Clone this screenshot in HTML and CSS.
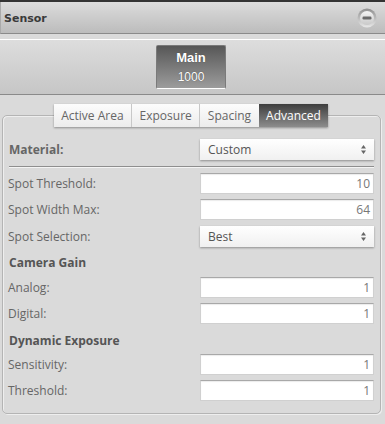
FILE: index.html
```html
<!DOCTYPE html>
<html lang="en">

<head>
    <meta charset="UTF-8">
    <title>Sensor</title>
    <link rel="stylesheet" href="styles.css">
</head>

<body>
    <div class="panel">
        <!-- Panel header -->
        <div class="panel-head">
            <span class="title">Sensor</span>
            <span class="collapse">
                <svg width="20" height="20" viewBox="0 0 20 20">
                    <defs>
                        <linearGradient id="ring" x1="0" y1="0" x2="0" y2="1">
                            <stop offset="0" stop-color="#8f8f8f"/>
                            <stop offset="1" stop-color="#e8e8e8"/>
                        </linearGradient>
                        <linearGradient id="face" x1="0" y1="0" x2="0" y2="1">
                            <stop offset="0" stop-color="#f4f4f4"/>
                            <stop offset="1" stop-color="#c8c8c8"/>
                        </linearGradient>
                    </defs>
                    <circle cx="10" cy="10" r="9.5" fill="url(#ring)"/>
                    <circle cx="10" cy="10" r="7" fill="url(#face)"/>
                    <rect x="5.5" y="8.5" width="9" height="3" rx="1.2" fill="#6a6a6a"/>
                </svg>
            </span>
        </div>

        <!-- Sensor selector -->
        <div class="sensor-bar">
            <div class="sensor-btn">
                <b>Main</b>
                <span>1000</span>
            </div>
        </div>

        <fieldset class="settings">
            <legend class="tabs">
                <span class="tab">Active Area</span>
                <span class="tab">Exposure</span>
                <span class="tab">Spacing</span>
                <span class="tab active">Advanced</span>
            </legend>

            <div class="row">
                <label class="strong">Material:</label>
                <div class="select">Custom
                    <svg class="arrows" width="5" height="9" viewBox="0 0 5 9"><path d="M2.5 0L5 3.5H0zM2.5 9L0 5.5H5z" fill="#666"/></svg>
                </div>
            </div>
            <hr class="sep">

            <div class="row">
                <label>Spot Threshold:</label>
                <div class="field">10</div>
            </div>
            <div class="row">
                <label>Spot Width Max:</label>
                <div class="field">64</div>
            </div>
            <div class="row tall">
                <label>Spot Selection:</label>
                <div class="select">Best
                    <svg class="arrows" width="5" height="9" viewBox="0 0 5 9"><path d="M2.5 0L5 3.5H0zM2.5 9L0 5.5H5z" fill="#666"/></svg>
                </div>
            </div>

            <h4>Camera Gain</h4>
            <div class="row">
                <label>Analog:</label>
                <div class="field">1</div>
            </div>
            <div class="row">
                <label>Digital:</label>
                <div class="field">1</div>
            </div>

            <h4 class="gap">Dynamic Exposure</h4>
            <div class="row">
                <label>Sensitivity:</label>
                <div class="field">1</div>
            </div>
            <div class="row">
                <label>Threshold:</label>
                <div class="field">1</div>
            </div>
        </fieldset>
    </div>
</body>

</html>
```

FILE: styles.css
```css
/* Basic reset */

* {
    margin: 0;
    padding: 0;
    box-sizing: border-box;
}

body {
    font-family: "Open Sans", sans-serif;
    font-size: 12px;
    background-color: #dadada;
    color: #666;
    width: 385px;
    height: 424px;
    overflow: hidden;
}

.panel {
    border-top: 2px solid #333;
}

/* Header bar */

.panel-head {
    height: 32px;
    display: flex;
    align-items: center;
    justify-content: space-between;
    padding: 0 8px 0 3px;
    background: linear-gradient(#dcdcdc, #bcbcbc);
    border-bottom: 1px solid #8a8a8a;
    border-left: 1px solid #aaa;
}

.title {
    font-family: "DejaVu Sans", sans-serif;
    font-weight: bold;
    font-size: 11px;
    color: #3a3a3a;
    padding-top: 1px;
}

.collapse svg {
    display: block;
}

/* Sensor selector */

.sensor-bar {
    margin-top: 5px;
    border-top: 1px solid #fff;
    height: 56px;
    background: linear-gradient(#dddddd, #c6c6c6);
    border-bottom: 1px solid #8a8a8a;
    display: flex;
    justify-content: center;
    padding-top: 5px;
}

.sensor-btn {
    width: 70px;
    height: 44px;
    margin-right: 3px;
    background: linear-gradient(#575757, #9c9c9c);
    border: 1px solid #7a7a7a;
    border-bottom: 1px solid #fff;
    border-radius: 2px;
    color: #fff;
    display: flex;
    flex-direction: column;
    align-items: center;
    font-family: "Liberation Sans", Arial, sans-serif;
    text-shadow: 0 0 1px #444;
}

.sensor-btn b {
    font-size: 13px;
    margin-top: 4px;
}

.sensor-btn span {
    font-size: 12px;
    margin-top: 5px;
}

/* Tabbed settings box */

.settings {
    margin: 9px 4px 0 2px;
    border: 1px solid #b4b4b4;
    border-radius: 5px;
    box-shadow: inset 1px 1px 0 #eee, 1px 1px 0 #eee;
    padding: 9px 6px 10px 5px;
}

.tabs {
    margin: 0 auto;
    display: flex;
    box-shadow: 0 1px 2px rgba(0, 0, 0, 0.35);
}

.tab {
    display: block;
    height: 23px;
    line-height: 23px;
    padding: 0 7.5px;
    background: linear-gradient(#fcfcfc, #ececec);
    color: #666;
    border-left: 1px solid #c8c8c8;
}

.tab:first-child {
    border-left: none;
}

.tab.active {
    background: linear-gradient(#3e3e3e, #8c8c8c);
    color: #fff;
    border-left: none;
}

.row {
    display: flex;
    align-items: center;
    justify-content: space-between;
    height: 26px;
}

.row.tall {
    height: 28px;
}

label {
    color: #666;
}

label.strong {
    font-weight: bold;
    font-size: 12px;
    color: #666;
    padding-left: 1px;
}

.field {
    width: 174px;
    height: 21px;
    background: #fff;
    border: 1px solid #d0d0d0;
    border-top-color: #a8a8a8;
    box-shadow: inset 0 1px 1px rgba(0, 0, 0, 0.08);
    text-align: right;
    padding-right: 3px;
    line-height: 19px;
    color: #777;
}

.select {
    width: 174px;
    height: 21px;
    background: linear-gradient(#ffffff, #f0f0f0);
    box-shadow: 0 1px 2px rgba(0, 0, 0, 0.35);
    padding: 0 8px;
    line-height: 21px;
    color: #555;
    display: flex;
    align-items: center;
    justify-content: space-between;
}

.arrows {
    display: block;
}

.sep {
    border: none;
    border-top: 1px solid #8e8e8e;
    border-bottom: 1px solid #f4f4f4;
    margin: 4px 0 2px 1px;
}

h4 {
    font-size: 12px;
    font-weight: bold;
    color: #555;
    height: 24px;
    line-height: 26px;
    padding-left: 1px;
}

h4.gap {
    height: 25px;
    line-height: 29px;
}
```
